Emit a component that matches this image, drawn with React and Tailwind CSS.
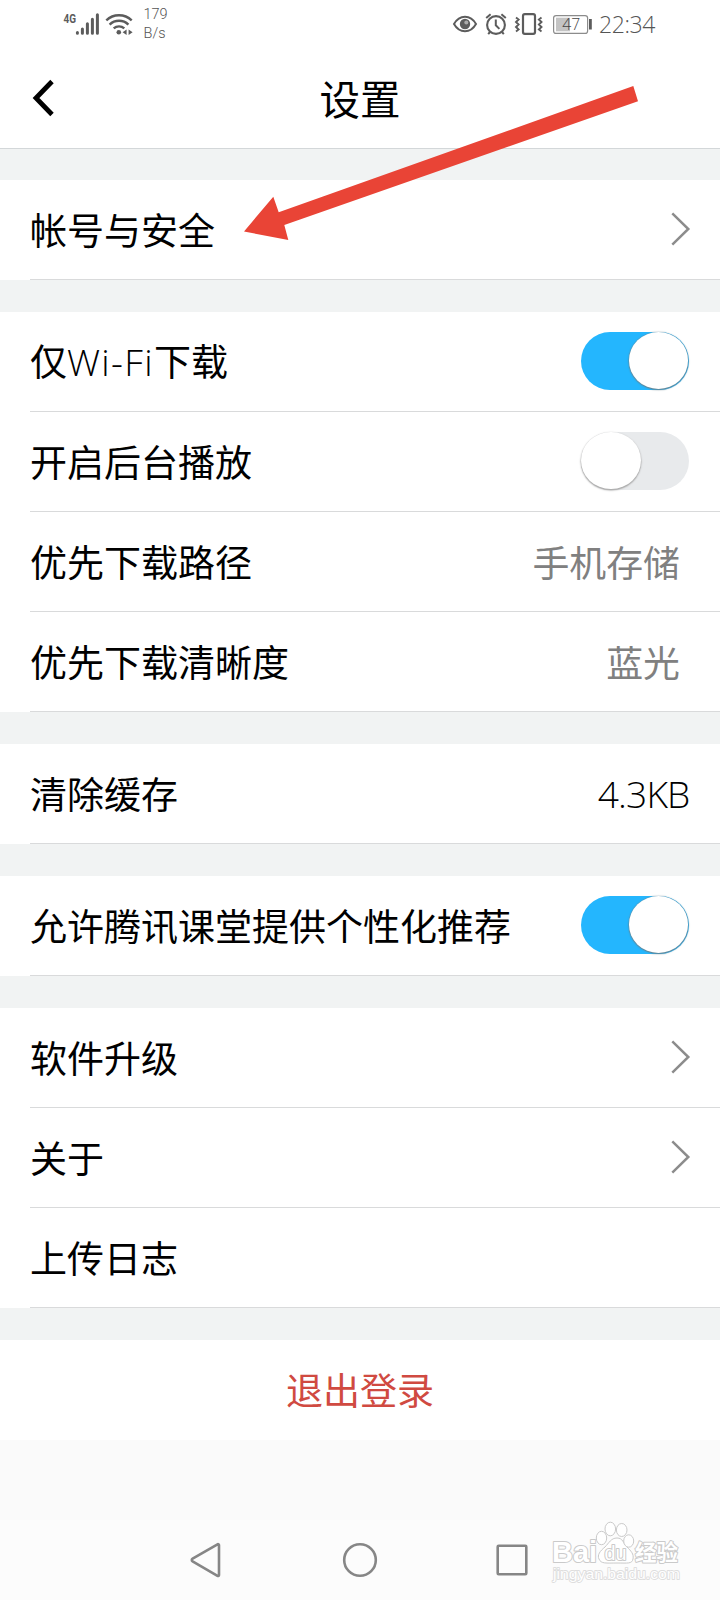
import React from "react";

function StatusBar() {
  return (
    <div className="flex h-[50px] shrink-0 items-start text-[#5c5c5c]">
      <svg className="ml-[60px] h-[50px] w-[76px]" viewBox="60 0 76 50">
        <text x="63.5" y="22.5" fontSize="12.5" fontWeight="700" textLength="12.5" lengthAdjust="spacingAndGlyphs" fill="#5c5c5c" fontFamily="Roboto, sans-serif">4G</text>
        <g stroke="#5c5c5c" strokeWidth="3" strokeLinecap="round">
          <path d="M77.4 32.4v.9M82.4 28.9v4.4M87.4 23.8v9.5M92.4 19.3v14M97.4 14.8v18.5" />
        </g>
        <g fill="none" stroke="#5c5c5c" strokeWidth="2.4">
          <path d="M106.300 20.300a18.500 18.500 0 0 1 25.400 0" />
          <path d="M109.600 24.600a13.500 13.500 0 0 1 18.800 0" />
          <path d="M113.700 28.400a8 8 0 0 1 10.600 0" />
        </g>
        <circle cx="118.800" cy="32.300" r="2.300" fill="#5c5c5c" />
        <path d="M126.600 29.500v5.600l-4-2.800zM128.600 29.500v5.600l4-2.800z" fill="#5c5c5c" />
      </svg>
      <div className="ml-[7.5px] mt-[6px] font-['Roboto',sans-serif] text-[14.5px] font-light leading-[18.5px] text-[#555]">
        <div>179</div>
        <div>B/s</div>
      </div>
      <svg className="ml-auto h-[50px] w-[142px]" viewBox="452 0 142 50">
        <g fill="none" stroke="#5c5c5c">
          <path d="M454 24c5.500-9.700 16.500-9.700 22 0c-5.500 9.700-16.500 9.700-22 0z" strokeWidth="2" />
          <circle cx="496" cy="25" r="8.900" strokeWidth="2.100" />
          <path d="M495.800 19.500v5.800l3.600 3.600" strokeWidth="2" />
          <path d="M486.200 18l4.400-3.800M505.800 18l-4.400-3.800M490 32l-1.800 2.200M502 32l1.800 2.200" strokeWidth="2" />
          <rect x="523" y="14.200" width="12" height="19.600" rx="1.800" strokeWidth="2.200" />
          <path d="M516 17.500l2.600 2-2.600 2.500 2.600 2.500-2.600 2.500 2.600 2.500-2.600 2M541.500 17.500l-2.600 2 2.600 2.500-2.600 2.500 2.600 2.500-2.600 2.500 2.600 2" strokeWidth="1.900" />
          <rect x="553.600" y="15.600" width="34" height="17.800" rx="2.500" stroke="#8c8c8c" strokeWidth="1.200" />
        </g>
        <circle cx="465" cy="24" r="5.200" fill="#5c5c5c" />
        <circle cx="466.300" cy="22.500" r="2" fill="#aaa" />
        <rect x="556" y="17.700" width="14" height="13.600" fill="#c4c4c4" />
        <text x="562.300" y="30.200" fontSize="16.500" fontWeight="300" textLength="18" lengthAdjust="spacingAndGlyphs" fill="#444" fontFamily="Open Sans, sans-serif">47</text>
        <rect x="589" y="19" width="2.800" height="10.500" fill="#5c5c5c" />
      </svg>
      <div className="ml-[5px] mr-[65px] mt-[8px] w-[56px] whitespace-nowrap font-['Open_Sans',sans-serif] text-[23px] font-light leading-8 tracking-[-0.4px] text-[#555]">22:34</div>
    </div>
  );
}

function Toggle({ on }) {
  return (
    <div className={on ? "mr-[31.5px] mb-[2px] flex h-[58px] w-[108px] justify-end rounded-full bg-[#24b6fe] pt-[0.5px] pr-[0.5px]" : "mr-[31.5px] mb-[2px] flex h-[58px] w-[108px] rounded-full bg-[#e8eaec] pt-[0.5px] pl-[0.5px]"}>
      <div className={on ? "h-[57px] w-[59.5px] rounded-[50%] bg-white shadow-[0_0.5px_1.5px_0.5px_#66808c]" : "h-[57px] w-[59.5px] rounded-[50%] bg-white shadow-[0_1px_1.5px_0.5px_#a8a8a8]"} />
    </div>
  );
}

function Chevron() {
  return (
    <svg className="mr-[29.5px] mb-px h-[36px] w-[22px]" viewBox="0 0 22 36" fill="none" stroke="#8c8c8c" strokeWidth="2.500">
      <path d="M3.300 2.300L19.300 18L3.300 33.700" />
    </svg>
  );
}

function Row({ label, children }) {
  return (
    <div className="h-[100px] bg-white pl-[30px]">
      <div className="flex h-[100px] items-center justify-between border-b border-[#d9dadb]">
        <div className="mb-px whitespace-nowrap text-[37px] leading-[54px]">{label}</div>
        {children}
      </div>
    </div>
  );
}

function Value({ children }) {
  return <div className="mr-[40px] mb-px text-[36.900px] leading-[54px] text-[#808080]">{children}</div>;
}

function Group({ children }) {
  return <section className="mb-8">{children}</section>;
}

function Watermark() {
  return (
    <svg className="absolute left-[548px] top-[1518px] h-[70px] w-[140px]" viewBox="548 1518 140 70">
      <g fill="#fff" stroke="#cacaca" strokeWidth="1">
        <path d="M617 1538c-6 0-8 5-12 9-5 4-8 8-6 12 2 5 7 4 18 4s15 1 16-4c1-5-2-8-6-12-4-4-4-9-10-9z" />
        <ellipse cx="601.500" cy="1538" rx="5.200" ry="6.700" />
        <ellipse cx="610.300" cy="1529" rx="5.300" ry="6.800" />
        <ellipse cx="621.700" cy="1530" rx="5.300" ry="6.500" />
        <ellipse cx="628.700" cy="1541" rx="5" ry="6.200" />
      </g>
      <g fill="#fff" stroke="#cacaca" strokeWidth="2" strokeLinejoin="round" paintOrder="stroke">
        <text x="552" y="1562" fontSize="29" fontWeight="700" textLength="45" lengthAdjust="spacingAndGlyphs" fontFamily="Liberation Sans, sans-serif">Bai</text>
        <text x="604.500" y="1559.500" fontSize="20" fontWeight="400" textLength="22" lengthAdjust="spacingAndGlyphs" fontFamily="Liberation Sans, sans-serif">du</text>
        <text x="635" y="1560" fontSize="22" fontWeight="700" textLength="43" lengthAdjust="spacingAndGlyphs" fontFamily="Noto Sans CJK SC, sans-serif">经验</text>
      </g>
      <text x="553" y="1578.500" fontSize="15" fontWeight="400" textLength="127" lengthAdjust="spacingAndGlyphs" fill="#fff" stroke="#dedede" strokeWidth="1.800" strokeLinejoin="round" paintOrder="stroke" fontFamily="Liberation Sans, sans-serif">jingyan.baidu.com</text>
    </svg>
  );
}

export default function App() {
  return (
    <div className="relative flex h-[1600px] w-[720px] flex-col overflow-hidden bg-white font-['Noto_Sans_CJK_SC',sans-serif] text-black">
      <StatusBar />
      <header className="grid h-[99px] shrink-0 grid-cols-[1fr_auto_1fr] items-center border-b border-[#d3d7d9]">
        <svg className="ml-[29.5px] mt-[-2px] h-[40px] w-[26px]" viewBox="0 0 26 40" fill="none" stroke="#000" strokeWidth="4.800">
          <path d="M22 3.500L6 20L22 36.500" />
        </svg>
        <h1 className="mb-[3px] text-[40.5px] font-normal leading-[60px]">设置</h1>
      </header>
      <main className="h-[1291px] shrink-0 bg-[#f1f3f3] pt-[31px]">
        <Group>
          <Row label="帐号与安全"><Chevron /></Row>
        </Group>
        <Group>
          <Row label={<>仅<span className="font-['Open_Sans',sans-serif] font-light tracking-[1.35px]">Wi-Fi</span>下载</>}><Toggle on /></Row>
          <Row label="开启后台播放"><Toggle /></Row>
          <Row label="优先下载路径"><Value>手机存储</Value></Row>
          <Row label="优先下载清晰度"><Value>蓝光</Value></Row>
        </Group>
        <Group>
          <Row label="清除缓存">
            <div className="mr-[30.5px] font-['Open_Sans',sans-serif] text-[37px] font-light leading-[54px] tracking-[-0.8px]">4.3KB</div>
          </Row>
        </Group>
        <Group>
          <Row label="允许腾讯课堂提供个性化推荐"><Toggle on /></Row>
        </Group>
        <Group>
          <Row label="软件升级"><Chevron /></Row>
          <Row label="关于"><Chevron /></Row>
          <Row label="上传日志" />
        </Group>
        <button className="flex h-[100px] w-full items-center justify-center bg-white pb-[2px] text-[37px] leading-[54px] text-[#d04a41]">退出登录</button>
      </main>
      <div className="h-20 shrink-0 bg-[#fafafa]" />
      <nav className="flex h-20 shrink-0 items-center bg-[#fcfcfc]">
        <svg className="h-20 w-[720px]" viewBox="0 1520 720 80" fill="none" stroke="#868686" strokeWidth="2.600" strokeLinejoin="round">
          <path d="M192.600 1558.600L217.500 1544.300a1 1 0 0 1 1.500 .9V1575a1 1 0 0 1-1.500 .9L192.600 1561.400a1.600 1.600 0 0 1 0-2.800z" />
          <circle cx="360" cy="1560" r="15.800" />
          <rect x="497.700" y="1545.700" width="28.600" height="28.600" rx="1" />
        </svg>
      </nav>
      <svg className="absolute left-[240px] top-[80px] h-[165px] w-[402px]" viewBox="240 80 402 165">
        <path d="M244 231.500L273.300 196.700L278.700 212.300L633.300 86L638 101.300L284.300 225L288.300 240z" fill="#e94436" />
      </svg>
      <Watermark />
    </div>
  );
}
